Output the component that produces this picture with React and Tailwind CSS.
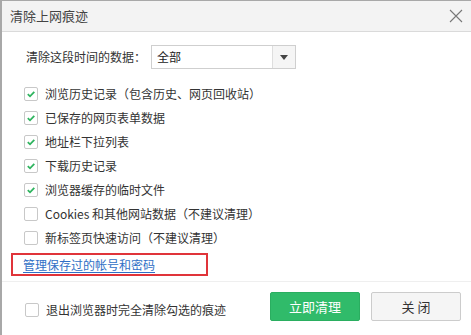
import React from 'react'

const font = { fontFamily: '"Noto Sans CJK SC", "Noto Sans", sans-serif' }

const items = [
  { label: '浏览历史记录（包含历史、网页回收站）', checked: true },
  { label: '已保存的网页表单数据', checked: true },
  { label: '地址栏下拉列表', checked: true },
  { label: '下载历史记录', checked: true },
  { label: '浏览器缓存的临时文件', checked: true },
  { label: 'Cookies 和其他网站数据（不建议清理）', checked: false },
  { label: '新标签页快速访问（不建议清理）', checked: false },
]

const Check = ({ checked }) => (
  <span className="w-[14px] h-[14px] shrink-0 rounded-[2px] border border-[#c8c8c8] bg-white flex items-center justify-center">
    {checked && (
      <svg width="10" height="10" viewBox="0 0 10 10">
        <path d="M1.8 5.2 L4 7.3 L8.3 2.8" fill="none" stroke="#2fb45f" strokeWidth="1.8" />
      </svg>
    )}
  </span>
)

const App = () => {
  return (
    <div
      className="w-[471px] h-[335px] bg-white border-l-2 border-t border-[#a8a8a8] flex flex-col text-[12px] text-[#333] overflow-hidden"
      style={font}
    >
      {/* Title bar */}
      <div className="h-[31px] shrink-0 bg-[#f3f3f3] border-b border-[#dadada] flex items-center justify-between pl-[8px] pr-[6px]">
        <span className="text-[13px] text-[#444]">清除上网痕迹</span>
        <svg width="14" height="14" viewBox="0 0 14 14" className="mr-[2px]">
          <path d="M1 1 L13 13 M13 1 L1 13" stroke="#777" strokeWidth="1.1" />
        </svg>
      </div>

      {/* Time range */}
      <div className="flex items-center pl-[24px] mt-[13px] h-[24px]">
        <span className="w-[125px]">清除这段时间的数据：</span>
        <div className="w-[145px] h-[24px] border border-[#cfcfcf] flex">
          <span className="flex-1 pl-[5px] leading-[22px] text-[#222]">全部</span>
          <span className="w-[23px] border-l border-[#dedede] bg-[#f5f5f5] flex items-center justify-center">
            <svg width="8" height="5" viewBox="0 0 8 5">
              <path d="M0 0 H8 L4 5 Z" fill="#444" />
            </svg>
          </span>
        </div>
      </div>

      {/* Options */}
      <div className="flex flex-col mt-[13px] pl-[22px]">
        {items.map((it) => (
          <div key={it.label} className="h-[24px] flex items-center gap-[7px]">
            <Check checked={it.checked} />
            <span>{it.label}</span>
          </div>
        ))}
      </div>

      {/* Manage link */}
      <div className="mt-[3px] ml-[9px] w-[197px] h-[23px] border-2 border-[#e0343a] flex items-center pl-[10px]">
        <a href="#" className="text-[#2f6fc6] underline underline-offset-2">管理保存过的帐号和密码</a>
      </div>

      {/* Footer */}
      <div className="mt-[5px] border-t border-[#efefef] flex-1 flex items-start">
        <div className="flex items-center gap-[7px] pl-[23px] mt-[19px]">
          <Check checked={false} />
          <span>退出浏览器时完全清除勾选的痕迹</span>
        </div>
        <div className="ml-auto mr-[10px] mt-[10px] flex gap-[11px]">
          <button className="w-[90px] h-[29px] rounded-[2px] bg-[#30bb6a] border border-[#2aae60] text-white text-[13px]">
            立即清理
          </button>
          <button className="w-[90px] h-[29px] rounded-[2px] bg-[#f5f5f5] border border-[#cccccc] text-[#333] text-[13px]">
            关 闭
          </button>
        </div>
      </div>
    </div>
  )
}

export default App
